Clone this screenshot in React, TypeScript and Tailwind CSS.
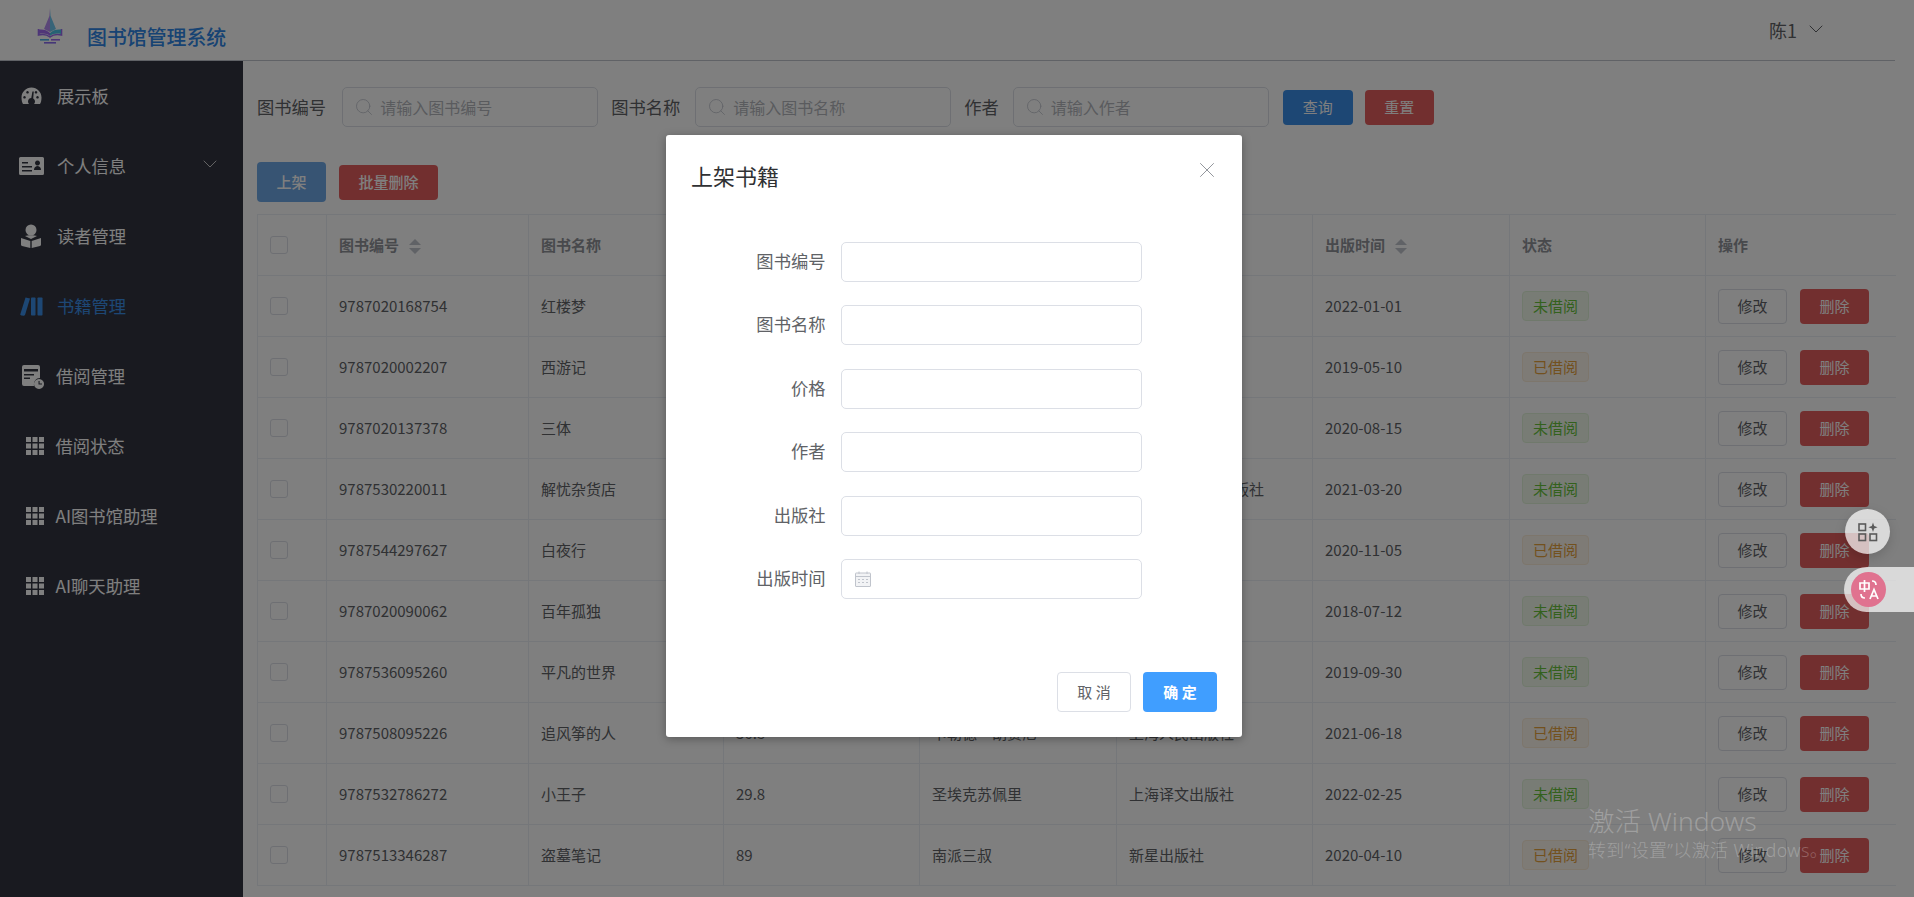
import React from 'react';
import { ChevronDown, Search, X } from 'lucide-react';

type Book = {
  id: string;
  name: string;
  price: string;
  author: string;
  press: string;
  date: string;
  lent: boolean;
};

const books: Book[] = [
  { id: '9787020168754', name: '红楼梦', price: '59.7', author: '曹雪芹', press: '人民文学出版社', date: '2022-01-01', lent: false },
  { id: '9787020002207', name: '西游记', price: '47.6', author: '吴承恩', press: '人民文学出版社', date: '2019-05-10', lent: true },
  { id: '9787020137378', name: '三体', price: '93', author: '刘慈欣', press: '重庆出版社', date: '2020-08-15', lent: false },
  { id: '9787530220011', name: '解忧杂货店', price: '39.5', author: '东野圭吾', press: '北京十月文艺出版社', date: '2021-03-20', lent: false },
  { id: '9787544297627', name: '白夜行', price: '45', author: '东野圭吾', press: '南海出版公司', date: '2020-11-05', lent: true },
  { id: '9787020090062', name: '百年孤独', price: '55', author: '马尔克斯', press: '南海出版公司', date: '2018-07-12', lent: false },
  { id: '9787536095260', name: '平凡的世界', price: '108', author: '路遥', press: '北京出版社', date: '2019-09-30', lent: false },
  { id: '9787508095226', name: '追风筝的人', price: '36.8', author: '卡勒德·胡赛尼', press: '上海人民出版社', date: '2021-06-18', lent: true },
  { id: '9787532786272', name: '小王子', price: '29.8', author: '圣埃克苏佩里', press: '上海译文出版社', date: '2022-02-25', lent: false },
  { id: '9787513346287', name: '盗墓笔记', price: '89', author: '南派三叔', press: '新星出版社', date: '2020-04-10', lent: true },
];

const Logo = () => (
  <svg width="26" height="36" viewBox="0 0 26 36" fill="none">
    <path d="M13 0 L13.6 8 L19 21 L13 24 Z" fill="#6fc8f0" />
    <path d="M13 0 L12.4 8 L7 21 L13 24 Z" fill="#b58cf0" />
    <path d="M1.5 21 V27 C6 26 10 26.5 13 29 C16 26.5 20 26 24.5 27 V21" stroke="#9a6cf0" strokeWidth="1.6" />
    <path d="M13 28 C16 25.5 20 25 24 26 V21.5 C20 21 16 22 13 25 Z" fill="#4cc4e8" />
    <path d="M13 28 C10 25.5 6 25 2 26 V21.5 C6 21 10 22 13 25 Z" fill="#a06cf0" />
    <rect x="3" y="31" width="9" height="1.6" fill="#4cb0e8" />
    <rect x="14" y="31" width="9" height="1.6" fill="#a06cf0" />
    <rect x="7" y="34" width="12" height="1.6" fill="#8a6cf0" />
  </svg>
);

const GaugeIcon = () => (
  <svg width="21" height="18" viewBox="0 0 21 18" fill="currentColor">
    <path fillRule="evenodd" d="M10.5 0.5 C16 0.5 20.5 5 20.5 10.5 C20.5 13 20 15.5 19 17 L13 17 C13.6 16.4 14 15.5 14 14.5 C14 13.2 13.2 12.2 12.2 11.6 L12.8 4.5 L11.4 4.4 L10.3 11 C8.4 11.1 7 12.6 7 14.5 C7 15.5 7.4 16.4 8 17 L2 17 C1 15.5 0.5 13 0.5 10.5 C0.5 5 5 0.5 10.5 0.5 Z M3.5 9 a1.3 1.3 0 1 0 0.01 0 Z M6.5 4 a1.3 1.3 0 1 0 0.01 0 Z M16.5 9 a1.3 1.3 0 1 0 0.01 0 Z M15 4 a1.3 1.3 0 1 0 0.01 0 Z" />
  </svg>
);

const CardIcon = () => (
  <svg width="25" height="18" viewBox="0 0 25 18" fill="currentColor">
    <path fillRule="evenodd" d="M1.5 0 H23.5 A1.5 1.5 0 0 1 25 1.5 V16.5 A1.5 1.5 0 0 1 23.5 18 H1.5 A1.5 1.5 0 0 1 0 16.5 V1.5 A1.5 1.5 0 0 1 1.5 0 Z M3 5 V6.4 H9 V5 Z M3 9 V10.4 H13 V9 Z M3 13 V14.4 H13 V13 Z M18.5 3.5 a2.5 2.5 0 1 0 0.01 0 Z M15 13 C15 10 17 9 18.5 9 C20 9 22 10 22 13 Z" />
  </svg>
);

const ReaderIcon = () => (
  <svg width="20" height="24" viewBox="0 0 20 24" fill="currentColor">
    <circle cx="10" cy="6" r="5.5" />
    <path d="M4 12 C6 11 14 11 16 12 L10 15 Z" />
    <path d="M0 14 L9.3 17 V24 L1 22 C0.4 21.8 0 21.4 0 20.8 Z M20 14 L10.7 17 V24 L19 22 C19.6 21.8 20 21.4 20 20.8 Z" />
  </svg>
);

const BooksIcon = () => (
  <svg width="23" height="19" viewBox="0 0 23 19" fill="currentColor">
    <path d="M5.5 0.5 L10 1.5 L5 18 C4.5 19 1 19 0.2 17.5 Z" />
    <rect x="11" y="0.5" width="4.5" height="18" rx="0.8" />
    <rect x="17.5" y="0.5" width="5" height="18" rx="0.8" />
  </svg>
);

const LedgerIcon = () => (
  <svg width="22" height="25" viewBox="0 0 22 25" fill="currentColor">
    <path fillRule="evenodd" d="M2 1 H16 A2 2 0 0 1 18 3 V14 C14 14 11.5 17 12 22 H2 A2 2 0 0 1 0 20 V3 A2 2 0 0 1 2 1 Z M2 5 V7.5 H16 V5 Z M2 10 V11.5 H12 V10 Z M2 13.5 V15 H8 V13.5 Z" />
    <path fillRule="evenodd" d="M17 15 a5 5 0 1 0 0.01 0 Z M16.5 17 V20.5 H20 V19.5 H17.6 V17 Z" />
  </svg>
);

const GridIcon = () => (
  <svg width="18" height="18" viewBox="0 0 18 18" fill="currentColor">
    <rect x="0" y="0" width="5" height="5" />
    <rect x="6.5" y="0" width="5" height="5" />
    <rect x="13" y="0" width="5" height="5" />
    <rect x="0" y="6.5" width="5" height="5" />
    <rect x="6.5" y="6.5" width="5" height="5" />
    <rect x="13" y="6.5" width="5" height="5" />
    <rect x="0" y="13" width="5" height="5" />
    <rect x="6.5" y="13" width="5" height="5" />
    <rect x="13" y="13" width="5" height="5" />
  </svg>
);

const SortCaret = () => (
  <svg className="ml-[10px] inline-block" width="12" height="15" viewBox="0 0 12 15" fill="#c0c4cc">
    <path d="M6 0 L12 6 H0 Z" />
    <path d="M0 9 H12 L6 15 Z" />
  </svg>
);

const Sidebar = () => (
  <aside className="w-[243px] shrink-0 bg-[#333541] text-white text-[17.3px]">
    <div className="flex h-[70px] items-center pl-[21px] pb-[1px]">
      <span className="flex w-[36px]"><GaugeIcon /></span>
      展示板
    </div>
    <div className="flex h-[70px] items-center pl-[19px]">
      <span className="flex w-[38px]"><CardIcon /></span>
      个人信息
      <ChevronDown size={24} strokeWidth={1} className="ml-[72px] -mt-[5px] text-[#c8c8c8]" />
    </div>
    <div className="flex h-[70px] items-center pl-[21px]">
      <span className="flex w-[36px]"><ReaderIcon /></span>
      读者管理
    </div>
    <div className="flex h-[70px] items-center pl-[20px] text-[#3a8fe8]">
      <span className="flex w-[37px]"><BooksIcon /></span>
      书籍管理
    </div>
    <div className="flex h-[70px] items-center pl-[22px]">
      <span className="flex w-[34px]"><LedgerIcon /></span>
      借阅管理
    </div>
    <div className="flex h-[70px] items-center pl-[25.5px]">
      <span className="flex w-[30px]"><GridIcon /></span>
      借阅状态
    </div>
    <div className="flex h-[70px] items-center pl-[25.5px]">
      <span className="flex w-[30px]"><GridIcon /></span>
      AI图书馆助理
    </div>
    <div className="flex h-[70px] items-center pl-[25.5px]">
      <span className="flex w-[30px]"><GridIcon /></span>
      AI聊天助理
    </div>
  </aside>
);

const SearchField = ({ placeholder }: { placeholder: string }) => (
  <div className="flex h-[40px] w-[256px] items-center rounded-[5px] border border-[#dcdfe6] pl-[11px] text-[16px] text-[#b4b7bd]">
    <Search size={20} strokeWidth={1} className="mr-[6px] text-[#c0c4cc]" />
    {placeholder}
  </div>
);

const BookRow = ({ book }: { book: Book }) => (
  <tr className="h-[61px] border-b border-[#ebeef5] text-[#606266]">
    <td className="border-x border-[#ebeef5] pl-[12px]">
      <div className="h-[18px] w-[18px] rounded-[3px] border border-[#dcdfe6] bg-white" />
    </td>
    <td className="border-r border-[#ebeef5] pl-[12px]">{book.id}</td>
    <td className="border-r border-[#ebeef5] pl-[12px]">{book.name}</td>
    <td className="border-r border-[#ebeef5] pl-[12px]">{book.price}</td>
    <td className="border-r border-[#ebeef5] pl-[12px]">{book.author}</td>
    <td className="border-r border-[#ebeef5] pl-[12px]">{book.press}</td>
    <td className="border-r border-[#ebeef5] pl-[12px]">{book.date}</td>
    <td className="border-r border-[#ebeef5] pl-[12px]">
      {book.lent ? (
        <span className="flex h-[30px] w-[67px] items-center justify-center rounded-[4px] border border-[#faecd8] bg-[#fdf6ec] text-[#e6a23c]">已借阅</span>
      ) : (
        <span className="flex h-[30px] w-[67px] items-center justify-center rounded-[4px] border border-[#e1f3d8] bg-[#f0f9eb] text-[#67c23a]">未借阅</span>
      )}
    </td>
    <td className="pl-[12px]">
      <div className="flex gap-[13px]">
        <button className="h-[35px] w-[69px] rounded-[4px] border border-[#dcdfe6] bg-white text-[#606266]">修改</button>
        <button className="h-[35px] w-[69px] rounded-[4px] bg-[#e55f5f] text-white">删除</button>
      </div>
    </td>
  </tr>
);

const BookTable = () => (
  <table className="w-[1638px] table-fixed border-collapse text-[15px]">
    <colgroup>
      <col className="w-[69px]" />
      <col className="w-[202px]" />
      <col className="w-[195px]" />
      <col className="w-[196px]" />
      <col className="w-[197px]" />
      <col className="w-[196px]" />
      <col className="w-[197px]" />
      <col className="w-[196px]" />
      <col className="w-[190px]" />
    </colgroup>
    <thead>
      <tr className="h-[61px] border-y border-[#ebeef5] text-left text-[#909399]">
        <th className="border-x border-[#ebeef5] pl-[12px]">
          <div className="h-[18px] w-[18px] rounded-[3px] border border-[#dcdfe6] bg-white" />
        </th>
        <th className="border-r border-[#ebeef5] pl-[12px]">图书编号<SortCaret /></th>
        <th className="border-r border-[#ebeef5] pl-[12px]">图书名称</th>
        <th className="border-r border-[#ebeef5] pl-[12px]">价格</th>
        <th className="border-r border-[#ebeef5] pl-[12px]">作者</th>
        <th className="border-r border-[#ebeef5] pl-[12px]">出版社</th>
        <th className="border-r border-[#ebeef5] pl-[12px]">出版时间<SortCaret /></th>
        <th className="border-r border-[#ebeef5] pl-[12px]">状态</th>
        <th className="pl-[12px]">操作</th>
      </tr>
    </thead>
    <tbody>
      {books.map((b) => (
        <BookRow key={b.id} book={b} />
      ))}
    </tbody>
  </table>
);

const FormRow = ({ label, children }: { label: string; children?: React.ReactNode }) => (
  <div className="flex h-[40px] items-center">
    <label className="-mt-[2px] w-[159.5px] text-right text-[17.3px] text-[#606266]">{label}</label>
    <div className="ml-[15.5px] flex h-[40px] w-[301px] items-center rounded-[5px] border border-[#dcdfe6] bg-white pl-[13px]">
      {children}
    </div>
  </div>
);

const BookDialog = () => (
  <div className="absolute left-[666px] top-[135px] flex h-[602px] w-[576px] flex-col rounded-[3px] bg-white shadow-[0_2px_10px_rgba(0,0,0,0.3)]">
    <div className="flex h-[107px] justify-between pl-[25px] pr-[22px] pt-[22px]">
      <span className="text-[22px] leading-[36px] text-[#303133]">上架书籍</span>
      <X size={26} strokeWidth={0.9} className="text-[#909399]" />
    </div>
    <div className="flex flex-col gap-[23.4px]">
      <FormRow label="图书编号" />
      <FormRow label="图书名称" />
      <FormRow label="价格" />
      <FormRow label="作者" />
      <FormRow label="出版社" />
      <FormRow label="出版时间">
        <svg width="16" height="16" viewBox="0 0 16 16" fill="none" stroke="#c0c4cc" strokeWidth="1">
          <rect x="0.5" y="2" width="15" height="13.5" rx="0.5" fill="#f2f3f5" />
          <path d="M0.5 5.5 H15.5 M4 0.5 V3 M12 0.5 V3" />
          <path d="M3 8.5 H5 M7 8.5 H9 M11 8.5 H13 M3 11.5 H5 M7 11.5 H9 M11 11.5 H13" />
        </svg>
      </FormRow>
    </div>
    <div className="mt-auto flex justify-end gap-[12px] pb-[25px] pr-[25px]">
      <button className="h-[40px] w-[74px] rounded-[4px] border border-[#dcdfe6] bg-white text-[15px] text-[#606266]">取 消</button>
      <button className="h-[40px] w-[74px] rounded-[4px] bg-[#409eff] text-[15px] font-bold text-white">确 定</button>
    </div>
  </div>
);

const FloatingTools = () => (
  <>
    <div className="absolute left-[1845px] top-[509px] flex h-[45px] w-[45px] items-center justify-center rounded-full bg-white/70 shadow-[0_4px_12px_rgba(0,0,0,0.15)]">
      <svg width="20" height="20" viewBox="0 0 20 20" fill="none" stroke="#5a5a5a" strokeWidth="1.6">
        <rect x="1" y="2" width="6.5" height="6.5" />
        <rect x="1" y="12" width="6.5" height="6.5" />
        <rect x="12" y="12" width="6.5" height="6.5" />
        <path d="M15 0.5 L16.2 4 L19.6 5.2 L16.2 6.4 L15 9.9 L13.8 6.4 L10.4 5.2 L13.8 4 Z" fill="#5a5a5a" stroke="none" />
      </svg>
    </div>
    <div className="absolute left-[1844px] top-[567px] flex h-[45px] w-[70px] items-center rounded-l-full bg-white/70 pl-[7px]">
      <div className="flex h-[35px] w-[35px] items-center justify-center rounded-full bg-[#e0728f]">
        <svg width="22" height="22" viewBox="0 0 22 22" fill="none" stroke="#fff" strokeWidth="1.7">
          <path d="M2 4 H11 V10 H2 Z M6.5 1 V13" />
          <path d="M14 2 C16.5 2 18 3.5 18 6 M3 15 C3 17.5 4.5 19 7 19" />
          <path d="M12 20 L16 10.5 L20 20 M13.3 17 H18.7" />
        </svg>
      </div>
    </div>
  </>
);

const WindowsMark = () => (
  <div className="pointer-events-none absolute left-[1588px] top-[804px] font-['Noto_Sans','Noto_Sans_CJK_SC',sans-serif] text-white/25">
    <div className="text-[26.5px] font-light leading-[34px]">激活 Windows</div>
    <div className="text-[18px] font-light leading-[24px] tracking-[0.35px]">转到“设置”以激活 Windows。</div>
  </div>
);

export default function App() {
  return (
    <div className="relative h-[897px] w-full overflow-hidden bg-white font-['Noto_Sans_CJK_SC','Noto_Sans',sans-serif]">
      <div className="w-[1895px]">
        <header className="flex h-[61px] items-start justify-between border-b border-[#c0c4cc]">
          <div className="flex">
            <div className="ml-[37px] mt-[8px]"><Logo /></div>
            <span className="ml-[24px] mt-[22px] text-[19.9px] font-medium leading-[30px] text-[#2f86e6]">图书馆管理系统</span>
          </div>
          <div className="mr-[67px] mt-[15px] flex items-center text-[18px] leading-[30px] text-[#606266]">
            陈1
            <ChevronDown size={24} strokeWidth={1} className="ml-[7px] -mt-[3px]" />
          </div>
        </header>
        <div className="flex h-[836px]">
          <Sidebar />
          <main className="flex-1 pl-[14px] pt-[26px]">
            <div className="flex items-center text-[17.3px] text-[#606266]">
              <span>图书编号</span>
              <div className="ml-[16px]"><SearchField placeholder="请输入图书编号" /></div>
              <span className="ml-[13px]">图书名称</span>
              <div className="ml-[15px]"><SearchField placeholder="请输入图书名称" /></div>
              <span className="ml-[13px]">作者</span>
              <div className="ml-[14px]"><SearchField placeholder="请输入作者" /></div>
              <button className="ml-[14px] h-[35px] w-[70px] rounded-[4px] bg-[#3a8fe8] text-[15px] text-white">查询</button>
              <button className="ml-[12px] h-[35px] w-[69px] rounded-[4px] bg-[#e55f5f] text-[15px] text-white">重置</button>
            </div>
            <div className="mb-[12px] mt-[35px] flex items-center">
              <button className="h-[40px] w-[69px] rounded-[4px] bg-[#6fa9e6] text-[15px] font-medium text-white">上架</button>
              <button className="ml-[13px] h-[35px] w-[99px] rounded-[4px] bg-[#e55f5f] text-[15px] font-medium text-white">批量删除</button>
            </div>
            <BookTable />
          </main>
        </div>
      </div>
      <div className="absolute inset-0 bg-black/50" />
      <BookDialog />
      <FloatingTools />
      <WindowsMark />
    </div>
  );
}
